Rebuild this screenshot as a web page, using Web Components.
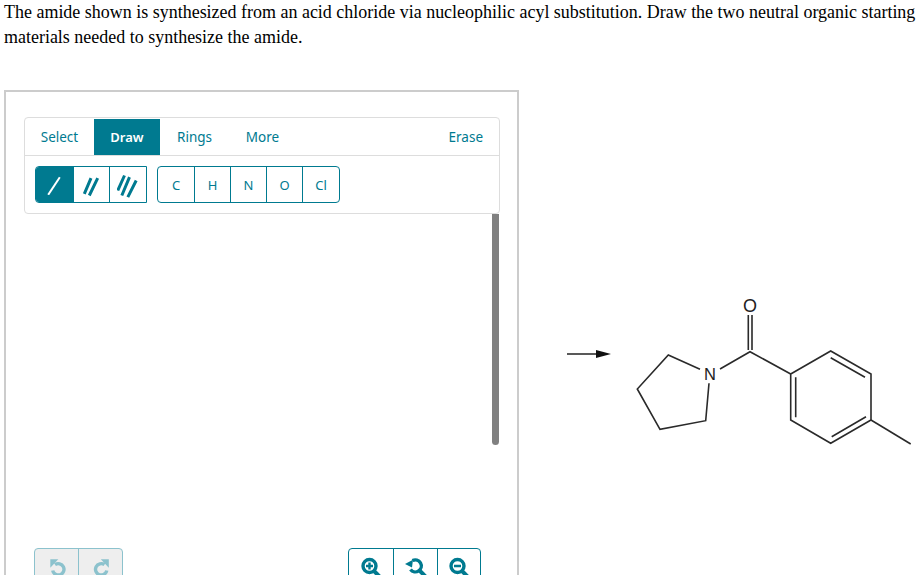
<!DOCTYPE html>
<html>
<head>
<meta charset="utf-8">
<title>Amide synthesis</title>
<style>
  html, body { margin: 0; height: 575px; overflow: hidden; background: #fff; }
</style>
</head>
<body>
<x-prompt>The amide shown is synthesized from an acid chloride via nucleophilic acyl substitution. Draw the two neutral organic starting materials needed to synthesize the amide.</x-prompt>
<x-stage>
  <x-sketcher>
    <x-tab slot="tabs" w="69">Select</x-tab>
    <x-tab slot="tabs" w="66" active>Draw</x-tab>
    <x-tab slot="tabs" w="69">Rings</x-tab>
    <x-tab slot="tabs" w="67">More</x-tab>
    <x-tab slot="tabs" end>Erase</x-tab>

    <x-seg slot="tools" square-right>
      <x-cell active w="37"><svg width="20" height="20" viewBox="0 0 20 20"><path d="M14.800 2.200 L3.200 19.800" stroke="currentColor" stroke-width="2" fill="none"/></svg></x-cell>
      <x-cell w="36"><svg width="20" height="26" viewBox="0 0 20 26"><path d="M9 6.200 L2.300 21.800 M15.700 6.200 L7.300 23.500" stroke="currentColor" stroke-width="3" fill="none"/></svg></x-cell>
      <x-cell w="37"><svg width="22" height="26" viewBox="0 0 22 26"><path d="M7.500 3.500 L0.800 18.500 M12.500 5.200 L4.800 23.500 M19.200 8.500 L10.800 25.200" stroke="currentColor" stroke-width="3" fill="none"/></svg></x-cell>
    </x-seg>
    <x-seg slot="tools">
      <x-cell w="36">C</x-cell>
      <x-cell w="36">H</x-cell>
      <x-cell w="36">N</x-cell>
      <x-cell w="36">O</x-cell>
      <x-cell w="37">Cl</x-cell>
    </x-seg>

    <x-seg slot="left" disabled>
      <x-cell w="43"><svg width="20" height="20" viewBox="0 0 20 20"><path d="M8 7.700 A5.700 5.700 0 1 1 5.700 13.500" stroke="currentColor" stroke-width="3.400" fill="none"/><path d="M3.300 2.300 H11.300 L3.300 10.800 Z" fill="currentColor"/></svg></x-cell>
      <x-cell w="44"><svg width="20" height="20" viewBox="0 0 20 20"><path d="M13.500 7.700 A5.700 5.700 0 1 0 15.800 13.500" stroke="currentColor" stroke-width="3.400" fill="none"/><path d="M17.800 2.300 H9.800 L17.800 10.800 Z" fill="currentColor"/></svg></x-cell>
    </x-seg>
    <x-seg slot="right">
      <x-cell w="44"><svg width="24" height="24" viewBox="0 0 24 24"><circle cx="10.500" cy="11" r="6.500" stroke="currentColor" stroke-width="3.400" fill="none"/><path d="M15 16 L23 24" stroke="currentColor" stroke-width="4"/><path d="M7 11 H14 M10.500 7.500 V14.500" stroke="currentColor" stroke-width="2.400"/></svg></x-cell>
      <x-cell w="44"><svg width="24" height="24" viewBox="0 0 24 24"><path d="M8.500 5.600 A6 6 0 1 1 6.500 14.500" stroke="currentColor" stroke-width="3.400" fill="none"/><path d="M16 16 L23 23" stroke="currentColor" stroke-width="4"/><path d="M1 9 L9 4.800 L8 12.500 Z" fill="currentColor"/></svg></x-cell>
      <x-cell w="43"><svg width="24" height="24" viewBox="0 0 24 24"><circle cx="10.500" cy="11" r="6.500" stroke="currentColor" stroke-width="3.400" fill="none"/><path d="M15 16 L23 24" stroke="currentColor" stroke-width="4"/><path d="M7 11 H14" stroke="currentColor" stroke-width="2.400"/></svg></x-cell>
    </x-seg>
  </x-sketcher>
  <x-scheme></x-scheme>
</x-stage>

<script>
// question text above the sketcher
class XPrompt extends HTMLElement {
  constructor() {
    super();
    this.attachShadow({ mode: 'open' });
    this.shadowRoot.innerHTML = `
      <style>
        :host {
          display: block;
          padding-left: 4px;
          width: 915px;
          font: 17.980px/25px "Liberation Serif", serif;
          color: #000;
        }
      </style>
      <slot></slot>`;
  }
}

// cut at the window bottom, as the widget is taller than the frame
class XStage extends HTMLElement {
  constructor() {
    super();
    this.attachShadow({ mode: 'open' });
    this.shadowRoot.innerHTML = `
      <style>
        :host { display: flex; align-items: flex-start; height: 485px; overflow: hidden; margin: 40px 0 0 4px; }
      </style>
      <slot></slot>`;
  }
}

// the drawing widget: toolbar, canvas with its scrollbar, bottom buttons
class XSketcher extends HTMLElement {
  constructor() {
    super();
    this.attachShadow({ mode: 'open' });
    this.shadowRoot.innerHTML = `
      <style>
        :host {
          display: block;
          flex: none;
          width: 476px;
          padding: 25px 17px 30px 18px;
          border: 2px solid #ccc;
          font-family: "Noto Sans", sans-serif;
          color: #007a90;
        }
        .bar { border: 1px solid #ddd; border-radius: 4px; height: 95px; }
        .tabs { display: flex; height: 36px; padding-top: 1px; border-bottom: 1px solid #ddd; }
        .tools { display: flex; gap: 10px; padding: 10px 0 0 10px; }
        .canvas { display: flex; justify-content: flex-end; height: 334px; padding-right: 1px; }
        .thumb { width: 7px; height: 231px; background: #808080; border-radius: 0 0 4px 4px; }
        .foot { display: flex; justify-content: space-between; padding: 0 19px 0 10px; }
      </style>
      <div class="bar">
        <div class="tabs"><slot name="tabs"></slot></div>
        <div class="tools"><slot name="tools"></slot></div>
      </div>
      <div class="canvas"><div class="thumb"></div></div>
      <div class="foot"><slot name="left"></slot><slot name="right"></slot></div>`;
  }
}

class XTab extends HTMLElement {
  constructor() {
    super();
    this.attachShadow({ mode: 'open' });
    this.shadowRoot.innerHTML = `
      <style>
        :host {
          display: flex;
          align-items: center;
          justify-content: center;
          font-size: 13.500px;
          color: #007a90;
        }
        :host([end]) { margin-left: auto; padding-right: 16px; }
        :host([active]) { background: #007a90; color: #fff; font-weight: 600; font-size: 13px; }
      </style>
      <slot></slot>`;
    if (this.hasAttribute('w')) this.style.width = this.getAttribute('w') + 'px';
  }
}

// joined group of buttons
class XSeg extends HTMLElement {
  constructor() {
    super();
    this.attachShadow({ mode: 'open' });
    this.shadowRoot.innerHTML = `
      <style>
        :host {
          display: flex;
          height: 35px;
          border: 1px solid #007a90;
          border-radius: 4px;
          overflow: hidden;
          color: #007a90;
        }
        :host([square-right]) { border-radius: 4px 0 0 4px; }
        :host([disabled]) { border-color: #8cc2cd; background: #eee; color: #8cc2cd; }
      </style>
      <slot></slot>`;
  }
}

class XCell extends HTMLElement {
  constructor() {
    super();
    this.attachShadow({ mode: 'open' });
    this.shadowRoot.innerHTML = `
      <style>
        :host {
          display: flex;
          align-items: center;
          justify-content: center;
          box-sizing: border-box;
          border-left: 1px solid;
          font-size: 13px;
        }
        :host(:first-child) { border-left: 0; }
        :host([active]) { background: #007a90; color: #fff; }
      </style>
      <slot></slot>`;
    this.style.width = this.getAttribute('w') + 'px';
  }
}

// reaction arrow and product structure
class XScheme extends HTMLElement {
  constructor() {
    super();
    this.attachShadow({ mode: 'open' });
    this.shadowRoot.innerHTML = `
      <style>
        :host { display: block; flex: none; margin-top: 200px; }
        svg { display: block; }
        text { font: 16.500px "Liberation Sans", sans-serif; fill: #222; }
        .o { font-size: 18px; }
      </style>
      <svg width="404" height="170" viewBox="519 290 404 170">
        <path d="M567 354 H600" stroke="#222" stroke-width="1.300"/>
        <path d="M596 350 L611 354 L596 358 Z" fill="#111"/>
        <g stroke="#2a2a2a" stroke-width="1.600" fill="none">
          <path d="M748.300 315 V350 M752 315 V350"/>
          <path d="M720 369 L750 351.700 L790.700 374"/>
          <path d="M700 369.300 L668.300 355 L637.300 389 L660 429.300 L705.700 420.700 L709 383.300"/>
          <path d="M790.700 374 L830.700 351 L871 374 V420 L830.700 443.300 L790.700 420 Z"/>
          <path d="M830.700 357.700 L865 377.300 M795.700 377.300 V417.300 M831.700 436.700 L866 416.700"/>
          <path d="M871 420 L910.700 444"/>
        </g>
        <text class="o" x="750" y="312" text-anchor="middle">O</text>
        <text x="710" y="380" text-anchor="middle">N</text>
      </svg>`;
  }
}

customElements.define('x-prompt', XPrompt);
customElements.define('x-stage', XStage);
customElements.define('x-sketcher', XSketcher);
customElements.define('x-tab', XTab);
customElements.define('x-seg', XSeg);
customElements.define('x-cell', XCell);
customElements.define('x-scheme', XScheme);
</script>
</body>
</html>
